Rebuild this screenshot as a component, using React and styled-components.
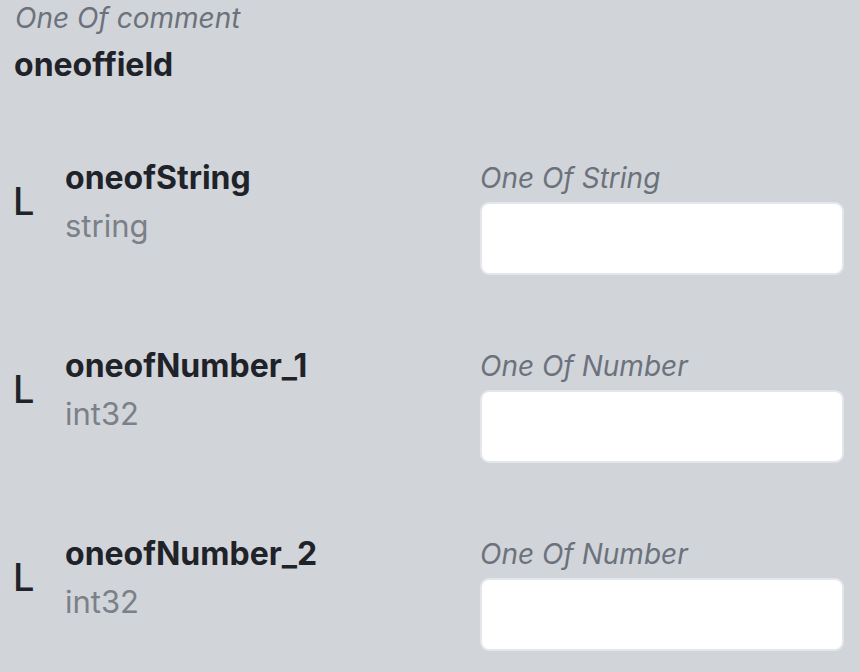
import React from "react";
import styled, { createGlobalStyle } from "styled-components";

const Global = createGlobalStyle`
  html, body { margin: 0; padding: 0; background: #d1d5da; }
  body { font-family: Inter, "Noto Sans", sans-serif; }
`;

const Page = styled.div`
  display: flex;
  flex-direction: column;
  padding: 0 16px 0 15px;
  width: 860px;
  height: 672px;
  box-sizing: border-box;
  overflow: hidden;
`;

const Comment = styled.div`
  font-style: italic;
  font-size: 28px;
  line-height: 36px;
  color: #6c727c;
`;

const Title = styled.div`
  font-weight: 700;
  font-size: 32px;
  line-height: 40px;
  color: #1f2329;
  margin-top: 9px;
  margin-left: -1px;
`;

const Row = styled.div`
  display: grid;
  grid-template-columns: 51px 1fr 364px;
  margin-top: ${(p) => (p.$first ? "75px" : "73px")};
`;

const Branch = styled.div`
  display: flex;
  align-items: center;
  font-size: 38px;
  font-weight: 500;
  line-height: 1;
  color: #1f2329;
  height: 82px;
  margin-left: -2px;
`;

const NameCol = styled.div`
  display: flex;
  flex-direction: column;
`;

const Name = styled.div`
  font-weight: 700;
  font-size: 32px;
  line-height: 36px;
  color: #1f2329;
  margin-left: -1px;
`;

const Type = styled.div`
  font-size: 31px;
  line-height: 36px;
  color: #7b8089;
  margin-top: 12px;
  margin-left: -1px;
`;

const FieldCol = styled.div`
  display: flex;
  flex-direction: column;
`;

const Label = styled.div`
  font-style: italic;
  font-size: 28px;
  line-height: 36px;
  color: #6c727c;
`;

const Input = styled.div`
  margin-top: 6px;
  height: 73px;
  box-sizing: border-box;
  background: #ffffff;
  border: 2px solid #e3e6ea;
  border-radius: 9px;
`;

const fields = [
  { name: "oneofString", type: "string", label: "One Of String" },
  { name: "oneofNumber_1", type: "int32", label: "One Of Number" },
  { name: "oneofNumber_2", type: "int32", label: "One Of Number" },
];

export default function App() {
  return (
    <Page>
      <Global />
      <Comment>One Of comment</Comment>
      <Title>oneoffield</Title>
      {fields.map((f, i) => (
        <Row key={f.name} $first={i === 0}>
          <Branch>L</Branch>
          <NameCol>
            <Name>{f.name}</Name>
            <Type>{f.type}</Type>
          </NameCol>
          <FieldCol>
            <Label>{f.label}</Label>
            <Input />
          </FieldCol>
        </Row>
      ))}
    </Page>
  );
}
